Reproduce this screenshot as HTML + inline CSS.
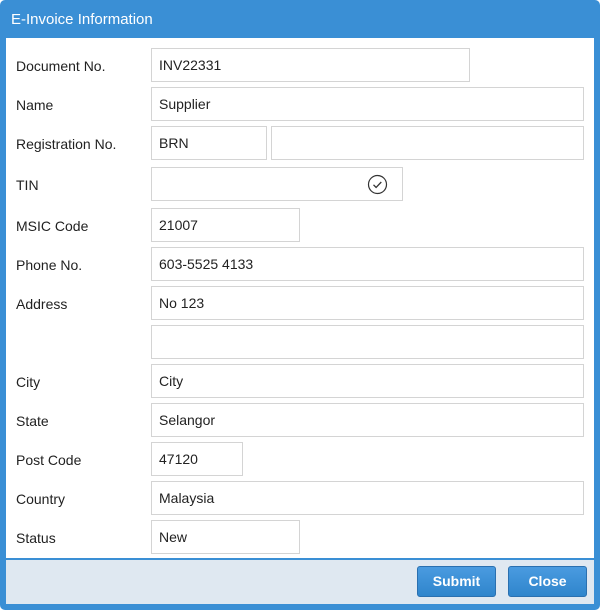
<!DOCTYPE html><html><head><style>
body{margin:0;width:600px;height:610px;overflow:hidden;background:#fff;font-family:"Liberation Sans",Arial,sans-serif}
.frame{position:absolute;left:0;top:0;width:600px;height:610px;background:#3a8fd5;border-radius:5px}
.title{position:absolute;left:11px;top:11px;color:#fff;font-size:15px}
.content{position:absolute;left:6px;top:38px;width:588px;height:520px;background:#fff}
.footer{position:absolute;left:6px;top:559px;width:588px;height:45px;background:#dfe8f1;border-top:1px solid #3a8fd5;box-sizing:border-box}
.lbl{position:absolute;left:16px;font-size:14px;color:#222}
.in{position:absolute;left:151px;height:34px;border:1px solid #d4d4d4;box-sizing:border-box;font-size:14px;color:#222;padding:8px 0 0 7px;background:#fff}
.btn{position:absolute;top:566px;width:79px;height:31px;background:linear-gradient(#4a9be0,#2f85cc);border:1px solid #2a70b0;border-radius:3px;box-sizing:border-box;color:#fff;font-weight:bold;font-size:14px;text-align:center;line-height:29px}
</style></head><body>
<div class="frame"></div>
<div class="title">E-Invoice Information</div>
<div class="content"></div>
<div class="footer"></div>
<div class="lbl" style="top:58px">Document No.</div><div class="in" style="top:48px;width:319px">INV22331</div>
<div class="lbl" style="top:97px">Name</div><div class="in" style="top:87px;width:433px">Supplier</div>
<div class="lbl" style="top:136px">Registration No.</div><div class="in" style="top:126px;width:116px">BRN</div><div class="in" style="top:126px;left:271px;width:313px"></div>
<div class="lbl" style="top:177px">TIN</div><div class="in" style="top:167px;width:252px"></div>
<svg style="position:absolute;left:367px;top:174px" width="21" height="21" viewBox="0 0 21 21"><circle cx="10.5" cy="10.5" r="9" fill="none" stroke="#333" stroke-width="1.2"/><path d="M6.5 10.8l2.6 2.6 5.2-5.4" fill="none" stroke="#333" stroke-width="1.3"/></svg>
<div class="lbl" style="top:218px">MSIC Code</div><div class="in" style="top:208px;width:149px">21007</div>
<div class="lbl" style="top:257px">Phone No.</div><div class="in" style="top:247px;width:433px">603-5525 4133</div>
<div class="lbl" style="top:296px">Address</div><div class="in" style="top:286px;width:433px">No 123</div>
<div class="in" style="top:325px;width:433px"></div>
<div class="lbl" style="top:374px">City</div><div class="in" style="top:364px;width:433px">City</div>
<div class="lbl" style="top:413px">State</div><div class="in" style="top:403px;width:433px">Selangor</div>
<div class="lbl" style="top:452px">Post Code</div><div class="in" style="top:442px;width:92px">47120</div>
<div class="lbl" style="top:491px">Country</div><div class="in" style="top:481px;width:433px">Malaysia</div>
<div class="lbl" style="top:530px">Status</div><div class="in" style="top:520px;width:149px">New</div>
<div class="btn" style="left:417px">Submit</div>
<div class="btn" style="left:508px">Close</div>
</body></html>
